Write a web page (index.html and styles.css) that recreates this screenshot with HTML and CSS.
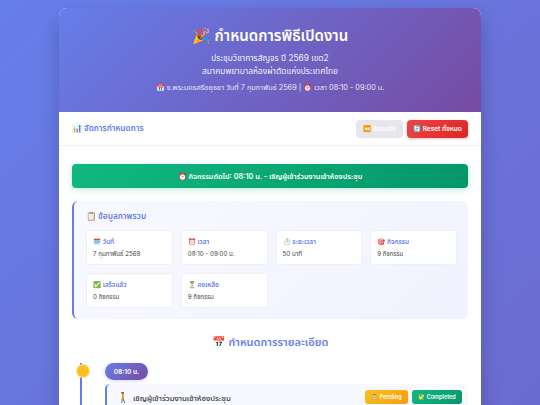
FILE: index.html
```html
<!DOCTYPE html>
<html lang="th">
<head>
<meta charset="utf-8">
<title>กำหนดการพิธีเปิดงาน</title>
<link rel="stylesheet" href="styles.css">
</head>
<body>
<div class="container">
  <header class="header">
    <h1>🎉 กำหนดการพิธีเปิดงาน</h1>
    <p class="sub">ประชุมวิชาการสัญจร ปี 2569 เขต2</p>
    <p class="sub">สมาคมพยาบาลห้องผ่าตัดแห่งประเทศไทย</p>
    <p class="meta">📅 จ.พระนครศรีอยุธยา วันที่ 7 กุมภาพันธ์ 2569 | ⏰ เวลา 08:10 - 09:00 น.</p>
  </header>
  <div class="controls">
    <div class="controls-title">📊 จัดการกำหนดการ</div>
    <div class="btns">
      <button class="btn btn-undo">⏪ ย้อนกลับ</button>
      <button class="btn btn-reset">🔄 Reset ทั้งหมด</button>
    </div>
  </div>
  <main class="content">
    <div class="next">⏰ กิจกรรมถัดไป: 08:10 น. - เชิญผู้เข้าร่วมงานเข้าห้องประชุม</div>
    <section class="overview">
      <h3>📋 ข้อมูลภาพรวม</h3>
      <div class="grid">
        <div class="card"><div class="label">🗓️ วันที่</div><div class="value">7 กุมภาพันธ์ 2569</div></div>
        <div class="card"><div class="label">⏰ เวลา</div><div class="value">08:10 - 09:00 น.</div></div>
        <div class="card"><div class="label">⏱️ ระยะเวลา</div><div class="value">50 นาที</div></div>
        <div class="card"><div class="label">🎯 กิจกรรม</div><div class="value">9 กิจกรรม</div></div>
        <div class="card"><div class="label">✅ เสร็จแล้ว</div><div class="value">0 กิจกรรม</div></div>
        <div class="card"><div class="label">⏳ คงเหลือ</div><div class="value">9 กิจกรรม</div></div>
      </div>
    </section>
    <h2 class="section-title">📅 กำหนดการรายละเอียด</h2>
    <div class="timeline">
      <div class="tl-item">
        <span class="dot"></span>
        <div class="time">08:10 น.</div>
        <div class="item">
          <div class="item-title"><span class="item-icon">🚶</span> เชิญผู้เข้าร่วมงานเข้าห้องประชุม</div>
          <div class="tags">
            <span class="tag tag-pending">⏳ Pending</span>
            <span class="tag tag-done">✅ Completed</span>
          </div>
        </div>
      </div>
    </div>
  </main>
</div>
</body>
</html>
```
FILE: styles.css
```css
* { box-sizing: border-box; margin: 0; padding: 0; }
html, body { height: 405px; overflow: hidden; }
html { background: #667eea; }
body {
  background: linear-gradient(135deg, #667eea 0%, #764ba2 100%) no-repeat;
  background-size: 540px 2000px;
  font-family: Inter, "Noto Sans Thai", "Liberation Sans", sans-serif;
  padding: 8px 59px 0;
  color: #333;
}
.container {
  background: #fff;
  border-radius: 8px 8px 0 0;
  box-shadow: 0 10px 20px rgba(0,0,0,.2);
  height: 500px;
  overflow: hidden;
}
.header {
  height: 104px;
  padding-top: 16px;
  text-align: center;
  color: #fff;
  background: linear-gradient(135deg, #667eea 0%, #764ba2 100%);
}
.header h1 { font-size: 15px; line-height: 24px; font-weight: 600; margin-bottom: 4px; }
.sub { font-size: 8.4px; line-height: 12.5px; font-weight: 400; opacity: .9; }
.meta { font-size: 7.3px; line-height: 12px; font-weight: 400; margin-top: 5px; opacity: .85; }
.controls {
  height: 34px;
  display: flex;
  align-items: center;
  justify-content: space-between;
  padding: 0 13px;
  border-bottom: 1px solid #eef0f3;
  background: #fff;
}
.controls-title { font-size: 8.3px; font-weight: 600; color: #667eea; }
.btns { display: flex; gap: 4px; }
.btn {
  height: 18px;
  border: 0;
  border-radius: 4px;
  font-family: inherit;
  font-size: 6.5px;
  font-weight: 600;
  color: #fff;
  white-space: nowrap;
}
.btn-undo { width: 47px; background: #e5e7eb; color: #fff; }
.btn-reset { width: 61px; background: linear-gradient(135deg, #ef4444, #dc2626); box-shadow: 0 1px 3px rgba(220,38,38,.3); }
.content { padding: 18px 13px 0; }
.next {
  height: 24px;
  display: flex;
  align-items: center;
  justify-content: center;
  border-radius: 4px;
  font-size: 7.3px;
  font-weight: 600;
  color: #fff;
  background: linear-gradient(135deg, #10b981, #059669);
  box-shadow: 0 2px 6px rgba(16,185,129,.25);
}
.overview {
  margin-top: 13px;
  height: 118px;
  padding: 8px 11px 0 12px;
  border-left: 2px solid #667eea;
  border-radius: 6px;
  background: linear-gradient(135deg, #f8f9ff, #f0f2ff);
}
.overview h3 { font-size: 8.3px; line-height: 14px; font-weight: 600; color: #667eea; margin-bottom: 7px; }
.grid { display: grid; grid-template-columns: repeat(4, 1fr); gap: 8px; }
.card {
  height: 35px;
  padding: 5px 6px;
  background: #fff;
  border: 1px solid #eef0f6;
  border-radius: 3px;
}
.label { font-size: 6.5px; line-height: 12px; font-weight: 600; color: #667eea; }
.value { font-size: 6.2px; line-height: 12px; color: #444; }
.section-title {
  margin-top: 14px;
  text-align: center;
  font-size: 11px;
  line-height: 18px;
  font-weight: 600;
  color: #667eea;
}
.timeline { position: relative; margin-top: 12px; }
.timeline::before {
  content: "";
  position: absolute;
  left: 8px;
  top: 0;
  bottom: -60px;
  width: 2px;
  background: #667eea;
}
.tl-item { position: relative; padding-left: 33px; }
.dot {
  position: absolute;
  left: 5px;
  top: 2px;
  width: 12px;
  height: 12px;
  border-radius: 50%;
  background: #fbbf24;
  box-shadow: 0 0 0 1px #fde68a;
}
.time {
  width: 43px;
  height: 17px;
  display: flex;
  align-items: center;
  justify-content: center;
  border-radius: 9px;
  font-size: 6.5px;
  font-weight: 600;
  color: #fff;
  background: linear-gradient(135deg, #667eea, #764ba2);
  box-shadow: 0 1px 4px rgba(102,126,234,.3);
}
.item {
  margin-top: 4px;
  height: 60px;
  padding: 6px 6px 0 10px;
  display: flex;
  justify-content: space-between;
  align-items: flex-start;
  border-left: 2px solid #667eea;
  border-radius: 5px;
  background: #f8f9ff;
}
.item-title { font-size: 7.8px; line-height: 14px; font-weight: 500; color: #333; }
.item-icon { font-size: 10px; margin-right: 2px; }
.tags { display: flex; gap: 4px; }
.tag {
  height: 14px;
  display: flex;
  align-items: center;
  justify-content: center;
  border-radius: 3px;
  font-size: 5.5px;
  font-weight: 600;
  color: #fff;
}
.tag-pending { width: 43px; background: linear-gradient(135deg, #fbbf24, #f59e0b); }
.tag-done { width: 50px; background: linear-gradient(135deg, #10b981, #059669); }
```
